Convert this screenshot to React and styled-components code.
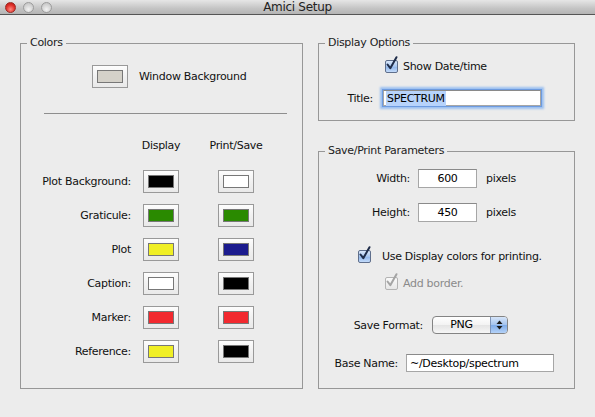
import React from "react";
import styled, { createGlobalStyle } from "styled-components";

const GlobalStyle = createGlobalStyle`
  html, body {
    margin: 0;
    padding: 0;
    background: #ececec;
  }
  body {
    font-family: "DejaVu Sans", "Liberation Sans", sans-serif;
    font-size: 11px;
    letter-spacing: -0.3px;
    color: #111;
  }
`;

const Window = styled.div`
  width: 595px;
  height: 417px;
  background: #ececec;
  display: flex;
  flex-direction: column;
  overflow: hidden;
`;

const TitleBar = styled.div`
  flex: none;
  height: 14px;
  display: grid;
  grid-template-columns: 1fr auto 1fr;
  align-items: center;
  padding: 0 5px;
  background: linear-gradient(#e6e6e6, #c4c4c4 60%, #b4b4b4);
  border-bottom: 1px solid #555;
`;

const Lights = styled.div`
  display: flex;
  gap: 7px;
`;

const Light = styled.span`
  width: 11px;
  height: 11px;
  box-sizing: border-box;
  border-radius: 50%;
  border: 1px solid ${(p) => (p.$red ? "#9a2a24" : "#9c9c9c")};
  background: ${(p) =>
    p.$red
      ? "radial-gradient(circle at 50% 70%, #ff8a80, #e0302a 55%, #b31812)"
      : "radial-gradient(circle at 50% 70%, #f2f2f2, #d4d4d4 55%, #bdbdbd)"};
`;

const WindowTitle = styled.div`
  font-size: 12px;
  line-height: 14px;
  color: #222;
`;

const Panels = styled.div`
  display: flex;
  gap: 15px;
  padding: 21px 0 0 20px;
  height: 353px;
`;

const Group = styled.fieldset`
  margin: 0;
  padding: 0;
  min-width: 0;
  box-sizing: border-box;
  width: ${(p) => p.$w}px;
  flex: ${(p) => (p.$grow ? 1 : "none")};
  border: 1px solid #979797;
`;

const Legend = styled.legend`
  margin-left: 6px;
  padding: 0 3px;
  font-size: 11px;
  line-height: 14px;
  color: #222;
`;

const GroupBody = styled.div`
  display: flex;
  flex-direction: column;
  padding: ${(p) => p.$pad || "0"};
`;

const Column = styled.div`
  display: flex;
  flex-direction: column;
  gap: 23px;
`;

const WindowRow = styled.div`
  display: flex;
  align-items: center;
  gap: 11px;
  margin-left: 71px;
`;

const Swatch = styled.div`
  width: 36px;
  height: 23px;
  box-sizing: border-box;
  border: 1px solid #999;
  background: linear-gradient(#fdfdfd, #f1f1f1 50%, #e9e9e9);
  display: flex;
  align-items: center;
  justify-content: center;

  &::after {
    content: "";
    width: 26px;
    height: 13px;
    box-sizing: border-box;
    border: 1px solid #777;
    background: ${(p) => p.$c};
  }
`;

const Rule = styled.div`
  height: 1px;
  background: #8e8e8e;
  margin: 25px 15px 0 23px;
`;

const ColorGrid = styled.div`
  display: grid;
  grid-template-columns: 122px 75px 36px;
  row-gap: 11px;
  align-items: center;
  margin-top: 25px;
`;

const HeadCell = styled.div`
  width: 36px;
  display: flex;
  justify-content: center;
  white-space: nowrap;
  line-height: 14px;
  margin-bottom: 6px;
`;

const RowLabel = styled.div`
  text-align: right;
  padding-right: 12px;
  white-space: nowrap;
`;

const Row = styled.div`
  display: flex;
  align-items: center;
  gap: ${(p) => p.$gap ?? 8}px;
  margin-left: ${(p) => p.$indent || 0}px;
  margin-top: ${(p) => p.$top || 0}px;
  height: ${(p) => p.$h || 13}px;
`;

const FieldLabel = styled.div`
  width: ${(p) => p.$w}px;
  text-align: right;
  white-space: nowrap;
`;

const Field = styled.div`
  width: ${(p) => p.$w}px;
  height: ${(p) => p.$h || 19}px;
  box-sizing: border-box;
  background: #fff;
  border: 1px solid #a6a6a6;
  border-top-color: #8a8a8a;
  display: flex;
  align-items: center;
  justify-content: ${(p) => (p.$center ? "center" : "flex-start")};
  padding: 0 3px;
  color: #000;
  white-space: nowrap;
  font-size: 11px;
`;

const FocusField = styled(Field)`
  margin-left: 2px;
  box-shadow: 0 0 0 1px #6d9be0, 0 0 2px 3px #9cc0f0;
  padding: 0 2px;
`;

const Selected = styled.span`
  background: #b7d3fb;
  padding: 1px 1px;
`;

const CheckBox = styled.span`
  width: 13px;
  height: 13px;
  box-sizing: border-box;
  border-radius: 2px;
  border: 1px solid ${(p) => (p.$off ? "#b3b3b3" : "#5f6f8c")};
  background: ${(p) =>
    p.$off
      ? "linear-gradient(#fafafa, #e6e6e6)"
      : "linear-gradient(#dce9fb, #a7c6ef 50%, #8db4ea 51%, #c3dbfa)"};
  display: flex;
  align-items: flex-end;
  justify-content: center;
  overflow: visible;
`;

const CheckText = styled.span`
  color: ${(p) => (p.$off ? "#8a8a8a" : "#111")};
  white-space: nowrap;
`;

const Popup = styled.div`
  width: 76px;
  height: 18px;
  box-sizing: border-box;
  border: 1px solid #848484;
  border-radius: 4px;
  display: flex;
  overflow: hidden;
  background: linear-gradient(#ffffff, #f3f3f3 50%, #e4e4e4 51%, #f6f6f6);
`;

const PopupText = styled.span`
  flex: 1;
  text-align: center;
  line-height: 16px;
  color: #000;
`;

const PopupArrows = styled.span`
  width: 16px;
  border-left: 1px solid #7f95b8;
  background: linear-gradient(#d6e5f9, #a3c3ee 50%, #7eabe8 51%, #b4d2f8);
  display: flex;
  align-items: center;
  justify-content: center;
`;

const Unit = styled.span`
  margin-left: 1px;
`;

function Check({ off }) {
  const c = off ? "#a4a4a4" : "#1f2d4a";
  return (
    <CheckBox $off={off}>
      <svg width="13" height="15" viewBox="0 0 13 15" style={{ overflow: "visible", marginBottom: 1 }}>
        <path d="M2.5 8.5 L5.3 12.2 L11.5 1.2" fill="none" stroke={c} strokeWidth="2" strokeLinecap="round" strokeLinejoin="round" />
      </svg>
    </CheckBox>
  );
}

const colorRows = [
  ["Plot Background:", "#000000", "#ffffff"],
  ["Graticule:", "#2a8a00", "#2a8a00"],
  ["Plot", "#f0ef25", "#1b1b8e"],
  ["Caption:", "#ffffff", "#000000"],
  ["Marker:", "#f2292f", "#f2292f"],
  ["Reference:", "#f0ef25", "#000000"],
];

export default function App() {
  return (
    <Window>
      <GlobalStyle />
      <TitleBar>
        <Lights>
          <Light $red />
          <Light />
          <Light />
        </Lights>
        <WindowTitle>Amici Setup</WindowTitle>
        <div />
      </TitleBar>

      <Panels>
        <Group $w={283}>
          <Legend>Colors</Legend>
          <GroupBody $pad="15px 0 0 0">
            <WindowRow>
              <Swatch $c="#d4d1c9" />
              <span>Window Background</span>
            </WindowRow>
            <Rule />
            <ColorGrid>
              <div />
              <HeadCell>Display</HeadCell>
              <HeadCell>Print/Save</HeadCell>
              {colorRows.map(([label, d, p]) => (
                <React.Fragment key={label}>
                  <RowLabel>{label}</RowLabel>
                  <Swatch $c={d} />
                  <Swatch $c={p} />
                </React.Fragment>
              ))}
            </ColorGrid>
          </GroupBody>
        </Group>

        <Column>
          <Group $w={257}>
            <Legend>Display Options</Legend>
            <GroupBody $pad="10px 0 12px 0">
              <Row $indent={66} $gap={5}>
                <Check />
                <CheckText>Show Date/time</CheckText>
              </Row>
              <Row $top={15} $h={20} $gap={8}>
                <FieldLabel $w={54}>Title:</FieldLabel>
                <FocusField $w={158} $h={16}>
                  <Selected>SPECTRUM</Selected>
                </FocusField>
              </Row>
            </GroupBody>
          </Group>

          <Group $w={257} $grow>
            <Legend>Save/Print Parameters</Legend>
            <GroupBody $pad="11px 0 0 0">
              <Row $h={19} $gap={8}>
                <FieldLabel $w={91}>Width:</FieldLabel>
                <Field $w={59} $center>600</Field>
                <Unit>pixels</Unit>
              </Row>
              <Row $h={19} $top={15} $gap={8}>
                <FieldLabel $w={91}>Height:</FieldLabel>
                <Field $w={59} $center>450</Field>
                <Unit>pixels</Unit>
              </Row>
              <Row $top={28} $indent={39} $gap={11}>
                <Check />
                <CheckText>Use Display colors for printing.</CheckText>
              </Row>
              <Row $top={14} $indent={66} $gap={5}>
                <Check off />
                <CheckText $off>Add border.</CheckText>
              </Row>
              <Row $top={26} $h={18} $gap={9}>
                <FieldLabel $w={104}>Save Format:</FieldLabel>
                <Popup>
                  <PopupText>PNG</PopupText>
                  <PopupArrows>
                    <svg width="7" height="10" viewBox="0 0 7 10">
                      <path d="M3.5 0.5 L6.5 4 L0.5 4 Z" fill="#1a1a1a" />
                      <path d="M0.5 6 L6.5 6 L3.5 9.5 Z" fill="#1a1a1a" />
                    </svg>
                  </PopupArrows>
                </Popup>
              </Row>
              <Row $top={20} $h={18} $gap={8}>
                <FieldLabel $w={79}>Base Name:</FieldLabel>
                <Field $w={148} $h={18}>~/Desktop/spectrum</Field>
              </Row>
            </GroupBody>
          </Group>
        </Column>
      </Panels>
    </Window>
  );
}
